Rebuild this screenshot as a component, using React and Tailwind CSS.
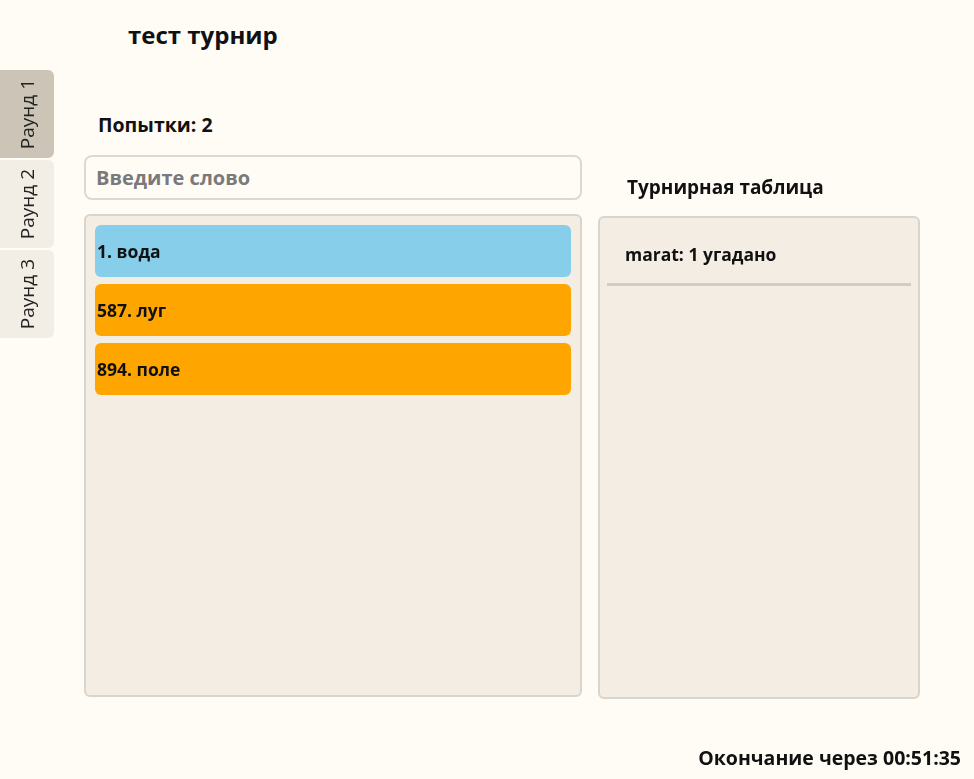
import { useState } from "react";

const rounds = ["Раунд 1", "Раунд 2", "Раунд 3"];

const words = [
  { id: 1, text: "вода", color: "bg-[#87ceeb]" },
  { id: 587, text: "луг", color: "bg-[#ffa500]" },
  { id: 894, text: "поле", color: "bg-[#ffa500]" },
];

const App = () => {
  const [activeRound, setActiveRound] = useState(0);
  const [word, setWord] = useState("");

  return (
    <div className="flex min-h-[779px] flex-col bg-[#fffcf6] font-['Open_Sans',sans-serif] text-[#111]">
      <h1 className="pl-[128px] pt-[18px] text-[24px] font-bold leading-[34px]">тест турнир</h1>

      <div className="mt-[18px] flex">
        <nav className="flex w-[54px] flex-col gap-[2px]">
          {rounds.map((round, index) => (
            <button
              key={round}
              onClick={() => setActiveRound(index)}
              className={`flex h-[88px] w-[54px] items-center justify-center rounded-r-md ${
                activeRound === index ? "bg-[#cbc4b7]" : "bg-[#f3eee5]"
              }`}
            >
              <span className="rotate-180 text-[19px] font-medium leading-none text-[#222] [writing-mode:vertical-rl]">
                {round}
              </span>
            </button>
          ))}
        </nav>

        <main className="ml-[30px] flex gap-[16px]">
          <section className="flex w-[498px] flex-col">
            <p className="mt-[42px] pl-[14px] text-[19.5px] font-bold leading-[26px]">Попытки: 2</p>
            <input
              type="text"
              autoFocus
              value={word}
              onChange={(event) => setWord(event.target.value)}
              placeholder="Введите слово"
              className="mt-[17px] h-[45px] w-full rounded-lg border-2 border-[#dcd8d2] bg-[#fffcf6] px-[10px] text-[20px] font-bold text-[#333] outline-none placeholder:text-[#7a7a7a]"
            />
            <div className="mt-[14px] flex h-[483px] flex-col gap-[7px] rounded-md border-2 border-[#d9d4cc] bg-[#f3ede3] px-[9px] py-[9px]">
              {words.map((item) => (
                <div
                  key={item.id}
                  className={`flex h-[52px] items-center rounded-md px-[2px] text-[17.5px] font-bold ${item.color}`}
                >
                  {item.id}. {item.text}
                </div>
              ))}
            </div>
          </section>

          <section className="flex w-[322px] flex-col">
            <h2 className="mt-[104px] pl-[29px] text-[19px] font-bold leading-[27px]">Турнирная таблица</h2>
            <div className="mt-[15px] h-[483px] rounded-md border-2 border-[#d9d4cc] bg-[#f3ede3] px-[7px]">
              <div className="border-b-[3px] border-[#d0cdc8] pb-[17px] pl-[18px] pt-[24px] text-[17.5px] font-bold leading-[24px]">
                marat: 1 угадано
              </div>
            </div>
          </section>
        </main>
      </div>

      <footer className="mt-auto pb-[7px] pr-[13px] text-right text-[19.5px] font-bold leading-[28px]">
        Окончание через 00:51:35
      </footer>
    </div>
  );
};

export default App;
